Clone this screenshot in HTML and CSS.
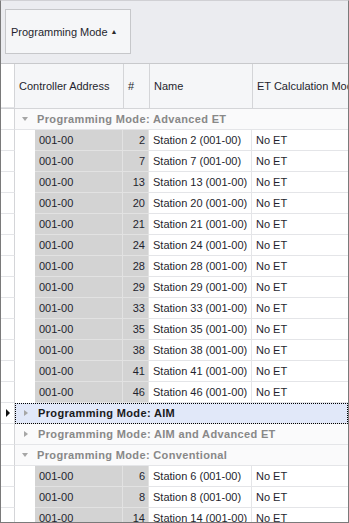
FILE: index.html
```html
<!DOCTYPE html>
<html>
  <head>
    <title>Stations by Programming Mode</title>
    <link rel="stylesheet" href="styles.css">
  </head>
  <body>
    <div class="grid">
      <div class="group-panel">
        <div class="group-btn">Programming Mode <span class="sort">&#9650;</span></div>
      </div>
      <div class="header">
        <div class="hcell ind"></div>
        <div class="hcell addr">Controller Address</div>
        <div class="hcell num">#</div>
        <div class="hcell name">Name</div>
        <div class="hcell et">ET Calculation Mode</div>
      </div>
      <div class="rows">
        <div class="grow">
          <div class="ind"></div>
          <div class="gcell"><span class="exp open"></span>Programming Mode: Advanced ET</div>
        </div>
        <div class="row"><div class="ind"></div><div class="pad"></div><div class="cell addr">001-00</div><div class="cell num">2</div><div class="cell name">Station 2 (001-00)</div><div class="cell et">No ET</div></div>
        <div class="row"><div class="ind"></div><div class="pad"></div><div class="cell addr">001-00</div><div class="cell num">7</div><div class="cell name">Station 7 (001-00)</div><div class="cell et">No ET</div></div>
        <div class="row"><div class="ind"></div><div class="pad"></div><div class="cell addr">001-00</div><div class="cell num">13</div><div class="cell name">Station 13 (001-00)</div><div class="cell et">No ET</div></div>
        <div class="row"><div class="ind"></div><div class="pad"></div><div class="cell addr">001-00</div><div class="cell num">20</div><div class="cell name">Station 20 (001-00)</div><div class="cell et">No ET</div></div>
        <div class="row"><div class="ind"></div><div class="pad"></div><div class="cell addr">001-00</div><div class="cell num">21</div><div class="cell name">Station 21 (001-00)</div><div class="cell et">No ET</div></div>
        <div class="row"><div class="ind"></div><div class="pad"></div><div class="cell addr">001-00</div><div class="cell num">24</div><div class="cell name">Station 24 (001-00)</div><div class="cell et">No ET</div></div>
        <div class="row"><div class="ind"></div><div class="pad"></div><div class="cell addr">001-00</div><div class="cell num">28</div><div class="cell name">Station 28 (001-00)</div><div class="cell et">No ET</div></div>
        <div class="row"><div class="ind"></div><div class="pad"></div><div class="cell addr">001-00</div><div class="cell num">29</div><div class="cell name">Station 29 (001-00)</div><div class="cell et">No ET</div></div>
        <div class="row"><div class="ind"></div><div class="pad"></div><div class="cell addr">001-00</div><div class="cell num">33</div><div class="cell name">Station 33 (001-00)</div><div class="cell et">No ET</div></div>
        <div class="row"><div class="ind"></div><div class="pad"></div><div class="cell addr">001-00</div><div class="cell num">35</div><div class="cell name">Station 35 (001-00)</div><div class="cell et">No ET</div></div>
        <div class="row"><div class="ind"></div><div class="pad"></div><div class="cell addr">001-00</div><div class="cell num">38</div><div class="cell name">Station 38 (001-00)</div><div class="cell et">No ET</div></div>
        <div class="row"><div class="ind"></div><div class="pad"></div><div class="cell addr">001-00</div><div class="cell num">41</div><div class="cell name">Station 41 (001-00)</div><div class="cell et">No ET</div></div>
        <div class="row"><div class="ind"></div><div class="pad"></div><div class="cell addr">001-00</div><div class="cell num">46</div><div class="cell name">Station 46 (001-00)</div><div class="cell et">No ET</div></div>
        <div class="grow focused">
          <div class="ind"><span class="cur"></span></div>
          <div class="gcell"><span class="exp"></span>Programming Mode: AIM</div>
        </div>
        <div class="grow">
          <div class="ind"></div>
          <div class="gcell"><span class="exp"></span>Programming Mode: AIM and Advanced ET</div>
        </div>
        <div class="grow">
          <div class="ind"></div>
          <div class="gcell"><span class="exp open"></span>Programming Mode: Conventional</div>
        </div>
        <div class="row"><div class="ind"></div><div class="pad"></div><div class="cell addr">001-00</div><div class="cell num">6</div><div class="cell name">Station 6 (001-00)</div><div class="cell et">No ET</div></div>
        <div class="row"><div class="ind"></div><div class="pad"></div><div class="cell addr">001-00</div><div class="cell num">8</div><div class="cell name">Station 8 (001-00)</div><div class="cell et">No ET</div></div>
        <div class="row"><div class="ind"></div><div class="pad"></div><div class="cell addr">001-00</div><div class="cell num">14</div><div class="cell name">Station 14 (001-00)</div><div class="cell et">No ET</div></div>
      </div>
    </div>
  </body>
</html>
```

FILE: styles.css
```css
html, body {
  margin: 0;
  padding: 0;
  font-family: "Liberation Sans", Arial, sans-serif;
  font-size: 11px;
  color: #1f1f2e;
}
.grid {
  width: 349px;
  height: 523px;
  box-sizing: border-box;
  border: 1px solid #7a7a7a;
  border-top-color: #d0d0d4;
  overflow: hidden;
  background: #ffffff;
}
.group-panel {
  background: #ebecf0;
  border-bottom: 1px solid #c8c9cc;
  padding: 8px 0 0 4px;
  box-sizing: border-box;
  height: 63px;
}
.group-btn {
  width: 126px;
  height: 45px;
  box-sizing: border-box;
  border: 1px solid #c6c7ca;
  background: #f5f6f8;
  display: flex;
  align-items: center;
  padding-left: 5px;
  white-space: nowrap;
}
.sort {
  font-size: 7px;
  margin-left: 3px;
  color: #2a2a2a;
}
.header {
  display: flex;
  height: 44px;
  background: #f5f6f8;
  border-bottom: 1px solid #d4d5d8;
}
.hcell {
  display: flex;
  align-items: center;
  padding-left: 4px;
  box-sizing: border-box;
  border-right: 1px solid #d4d5d8;
  white-space: nowrap;
  overflow: hidden;
}
.hcell.ind {
  width: 14px;
  padding: 0;
}
.hcell.addr { width: 109px; }
.hcell.num { width: 26px; }
.hcell.name { width: 103px; }
.hcell.et { flex: 1; border-right: none; }

.row, .grow {
  display: flex;
  height: 21px;
  line-height: 20px;
  white-space: nowrap;
}
.ind {
  width: 14px;
  flex: none;
  box-sizing: border-box;
  border-right: 1px solid #d4d5d8;
  border-bottom: 1px solid #e4e5e8;
  background: #ffffff;
  display: flex;
  align-items: center;
  justify-content: center;
}
.pad {
  width: 20px;
  flex: none;
  background: #ffffff;
}
.cell {
  box-sizing: border-box;
  border-bottom: 1px solid #e4e5e8;
  border-right: 1px solid #e4e5e8;
  padding: 0 4px;
  overflow: hidden;
}
.cell.addr {
  width: 88px;
  background: #d3d3d3;
  border-color: #e2e2e2;
}
.cell.num {
  width: 26px;
  background: #d3d3d3;
  border-color: #e2e2e2;
  text-align: right;
  padding-right: 3px;
}
.cell.name { width: 103px; }
.cell.et { flex: 1; border-right: none; }

.gcell {
  flex: 1;
  box-sizing: border-box;
  border-bottom: 1px solid #e4e5e8;
  background: #fafafb;
  font-weight: bold;
  letter-spacing: 0.35px;
  color: #888888;
  display: flex;
  align-items: center;
  padding-left: 6px;
}
.exp {
  width: 0;
  height: 0;
  margin-right: 10px;
  border-top: 3.5px solid transparent;
  border-bottom: 3.5px solid transparent;
  border-left: 4px solid #a6a6a6;
  margin-left: 3px;
}
.exp.open {
  border-left: 3.5px solid transparent;
  border-right: 3.5px solid transparent;
  border-top: 4px solid #a6a6a6;
  border-bottom: none;
  margin-left: 1px;
  margin-right: 9px;
}
.grow.focused .gcell {
  background: #e1e8f9;
  color: #1a1a1a;
  outline: 1px dotted #000000;
  outline-offset: -1px;
}
.cur {
  width: 0;
  height: 0;
  border-top: 4px solid transparent;
  border-bottom: 4px solid transparent;
  border-left: 4px solid #111111;
}
```
